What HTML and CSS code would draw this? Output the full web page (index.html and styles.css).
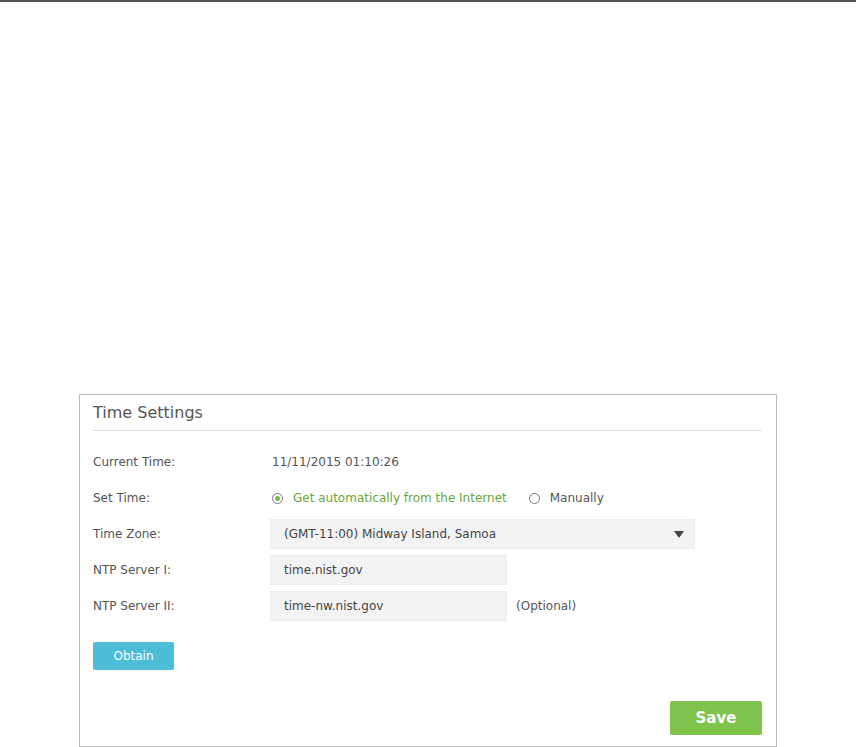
FILE: index.html
```html
<!DOCTYPE html>
<html lang="en">
	<head>
		<meta charset="UTF-8" />
		<title>Time Settings</title>
		<link rel="stylesheet" href="styles.css">
	</head>
	<body>
		<div class="topRule"></div>

		<section class="panel">
			<h2 class="panelTitle">Time Settings</h2>

			<div class="formRows">
				<div class="row">
					<span class="label">Current Time:</span>
					<span class="value">11/11/2015 01:10:26</span>
				</div>

				<div class="row">
					<span class="label">Set Time:</span>
					<span class="value radios">
						<span class="radio checked"><i></i>Get automatically from the Internet</span>
						<span class="radio"><i></i>Manually</span>
					</span>
				</div>

				<div class="row">
					<span class="label">Time Zone:</span>
					<div class="select">
						<span>(GMT-11:00) Midway Island, Samoa</span>
						<b class="caret"></b>
					</div>
				</div>

				<div class="row">
					<span class="label">NTP Server I:</span>
					<div class="field">time.nist.gov</div>
				</div>

				<div class="row">
					<span class="label">NTP Server II:</span>
					<div class="field">time-nw.nist.gov</div>
					<span class="hint">(Optional)</span>
				</div>
			</div>

			<button class="btn btnBlue">Obtain</button>

			<div class="actions">
				<button class="btn btnGreen">Save</button>
			</div>
		</section>
	</body>
</html>
```

FILE: styles.css
```css
* {
	box-sizing: border-box;
	margin: 0;
	padding: 0;
}

body {
	background: #fff;
	font-family: 'DejaVu Sans', Verdana, sans-serif;
	font-size: 12px;
	color: #555;
}

.topRule {
	height: 2px;
	border-top: 2px solid #555;
}

.panel {
	width: 698px;
	height: 353px;
	margin: 392px 0 0 79px;
	border: 1px solid #bdbdbd;
	padding: 0 14px 0 13px;
	display: flex;
	flex-direction: column;
}

.panelTitle {
	font-size: 16px;
	font-weight: normal;
	line-height: 24px;
	padding: 6px 0 5px;
	border-bottom: 1px solid #ddd;
	color: #555;
}

.formRows {
	display: flex;
	flex-direction: column;
	gap: 6px;
	margin-top: 16px;
}

.row {
	display: flex;
	align-items: center;
	height: 30px;
}

.label {
	width: 177px;
	flex-shrink: 0;
}

.value {
	padding-left: 2px;
}

.radios {
	display: flex;
	gap: 22px;
}

.radio {
	display: flex;
	align-items: center;
	gap: 10px;
}

.radio i {
	width: 11px;
	height: 11px;
	border: 1px solid #777;
	border-radius: 50%;
	position: relative;
}

.radio.checked {
	color: #6aa83a;
}

.radio.checked i::after {
	content: "";
	position: absolute;
	top: 2px;
	left: 2px;
	width: 5px;
	height: 5px;
	border-radius: 50%;
	background: #7ab648;
}

.select,
.field {
	height: 30px;
	background: #f3f3f3;
	box-shadow: inset 0 0 3px rgba(0, 0, 0, 0.06);
	display: flex;
	align-items: center;
	padding-left: 14px;
	color: #444;
}

.select {
	width: 425px;
	justify-content: space-between;
	padding-right: 11px;
}

.caret {
	width: 0;
	height: 0;
	border-left: 5px solid transparent;
	border-right: 5px solid transparent;
	border-top: 7px solid #444;
}

.field {
	width: 237px;
}

.hint {
	margin-left: 9px;
}

.btn {
	border: 0;
	border-radius: 2px;
	color: #fff;
	font-family: inherit;
	cursor: pointer;
}

.btnBlue {
	align-self: flex-start;
	margin-top: 21px;
	width: 81px;
	height: 28px;
	font-size: 12px;
	background: #4cbcd8;
}

.actions {
	display: flex;
	justify-content: flex-end;
	margin-top: 31px;
}

.btnGreen {
	width: 92px;
	height: 34px;
	font-size: 15px;
	font-weight: bold;
	background: #80c34d;
}
```
